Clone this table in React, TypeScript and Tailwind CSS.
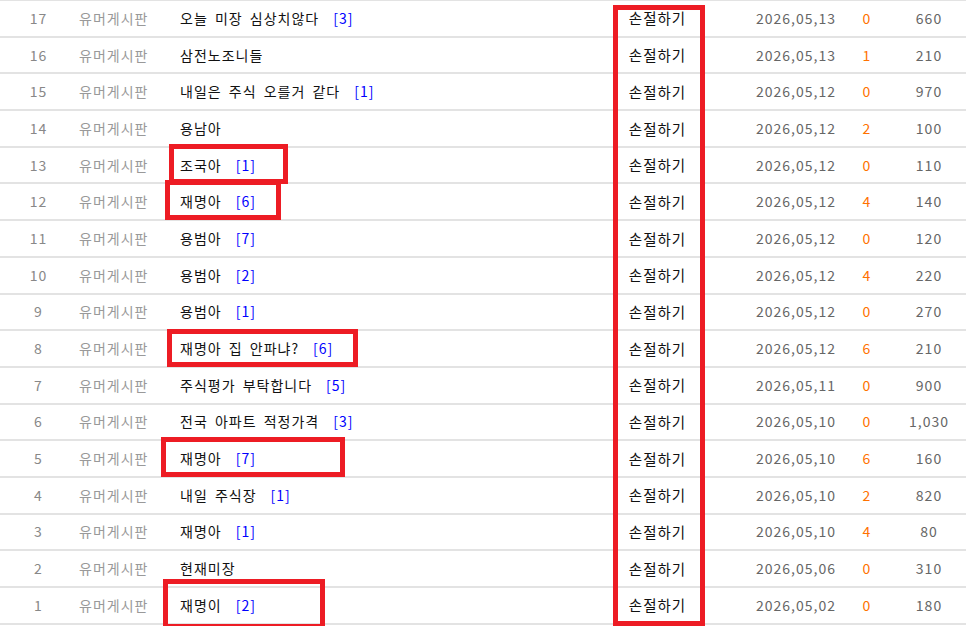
import React from "react";

type Post = {
  no: number;
  title: string;
  reply?: number;
  date: string;
  comments: number;
  views: string;
};

const posts: Post[] = [
  { no: 17, title: "오늘 미장 심상치않다", reply: 3, date: "2026,05,13", comments: 0, views: "660" },
  { no: 16, title: "삼전노조니들", date: "2026,05,13", comments: 1, views: "210" },
  { no: 15, title: "내일은 주식 오를거 같다", reply: 1, date: "2026,05,12", comments: 0, views: "970" },
  { no: 14, title: "용남아", date: "2026,05,12", comments: 2, views: "100" },
  { no: 13, title: "조국아", reply: 1, date: "2026,05,12", comments: 0, views: "110" },
  { no: 12, title: "재명아", reply: 6, date: "2026,05,12", comments: 4, views: "140" },
  { no: 11, title: "용범아", reply: 7, date: "2026,05,12", comments: 0, views: "120" },
  { no: 10, title: "용범아", reply: 2, date: "2026,05,12", comments: 4, views: "220" },
  { no: 9, title: "용범아", reply: 1, date: "2026,05,12", comments: 0, views: "270" },
  { no: 8, title: "재명아 집 안파냐?", reply: 6, date: "2026,05,12", comments: 6, views: "210" },
  { no: 7, title: "주식평가 부탁합니다", reply: 5, date: "2026,05,11", comments: 0, views: "900" },
  { no: 6, title: "전국 아파트 적정가격", reply: 3, date: "2026,05,10", comments: 0, views: "1,030" },
  { no: 5, title: "재명아", reply: 7, date: "2026,05,10", comments: 6, views: "160" },
  { no: 4, title: "내일 주식장", reply: 1, date: "2026,05,10", comments: 2, views: "820" },
  { no: 3, title: "재명아", reply: 1, date: "2026,05,10", comments: 4, views: "80" },
  { no: 2, title: "현재미장", date: "2026,05,06", comments: 0, views: "310" },
  { no: 1, title: "재명이", reply: 2, date: "2026,05,02", comments: 0, views: "180" },
];

// red highlight boxes drawn over the list
const marks = [
  "left-[613px] top-[5px] w-[92px] h-[621px]",
  "left-[169px] top-[144px] w-[119px] h-[40px]",
  "left-[165px] top-[180px] w-[116px] h-[40px]",
  "left-[167px] top-[329px] w-[191px] h-[38px]",
  "left-[161px] top-[437px] w-[184px] h-[40px]",
  "left-[163px] top-[579px] w-[162px] h-[50px]",
];

export default function App() {
  return (
    <div className="relative w-[972px] h-[626px] overflow-hidden bg-white font-['Noto_Sans_CJK_KR','Noto_Sans',sans-serif] text-[14px] tracking-[1px]">
      <div className="w-[966px] border-t border-[#e3e3e3]">
        {posts.map((p) => (
          <div key={p.no} className="flex items-center h-[36.7px] border-b-2 border-[#e3e3e3]">
            <div className="w-[77px] text-center text-[#888]">{p.no}</div>
            <div className="w-[93px] pl-[2px] text-[#999]">유머게시판</div>
            <div className="w-[443px] pl-[10px] text-[#111] [word-spacing:3px]">
              {p.title}
              {p.reply !== undefined && <span className="ml-[14px] text-[#0000ff]">[{p.reply}]</span>}
            </div>
            <div className="w-[89px] text-center text-[#111] text-[14.5px]">손절하기</div>
            <div className="w-[140px] pl-[54px] text-[#666]">{p.date}</div>
            <div className="w-[50px] text-center text-[#ff7200]">{p.comments}</div>
            <div className="w-[74px] text-center text-[#666]">{p.views}</div>
          </div>
        ))}
      </div>
      {marks.map((m) => (
        <div key={m} className={`absolute border-[5px] border-[#ed1c24] ${m}`} />
      ))}
    </div>
  );
}
